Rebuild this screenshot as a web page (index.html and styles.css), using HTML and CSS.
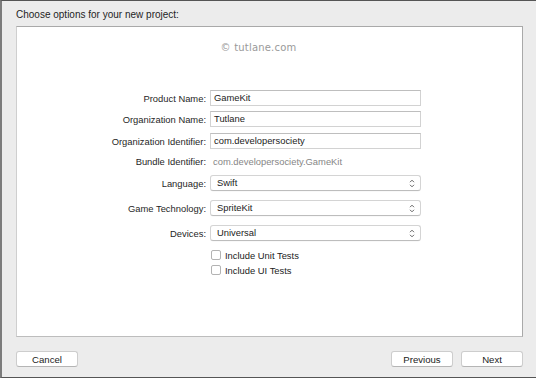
FILE: index.html
```html
<!DOCTYPE html>
<html lang="en">
<head>
  <meta charset="UTF-8" />
  <title>Choose options for your new project</title>
  <link rel="stylesheet" href="styles.css">
</head>
<body>
  <div class="window">
    <div class="title">Choose options for your new project:</div>

    <div class="panel">
      <div class="watermark">&copy; tutlane.com</div>

      <div class="form">
        <div class="row row-product">
          <label>Product Name:</label>
          <div class="field">GameKit</div>
        </div>
        <div class="row row-org">
          <label>Organization Name:</label>
          <div class="field">Tutlane</div>
        </div>
        <div class="row row-orgid">
          <label>Organization Identifier:</label>
          <div class="field">com.developersociety</div>
        </div>
        <div class="row row-bundle">
          <label>Bundle Identifier:</label>
          <div class="value">com.developersociety.GameKit</div>
        </div>
        <div class="row row-lang">
          <label>Language:</label>
          <div class="popup">Swift
            <svg class="arrows" width="6" height="9" viewBox="0 0 6 9"><path d="M1 3.2 L3 1.2 L5 3.2 M1 5.8 L3 7.8 L5 5.8" fill="none" stroke="#555" stroke-width="0.9"/></svg>
          </div>
        </div>
        <div class="row row-popup">
          <label>Game Technology:</label>
          <div class="popup">SpriteKit
            <svg class="arrows" width="6" height="9" viewBox="0 0 6 9"><path d="M1 3.2 L3 1.2 L5 3.2 M1 5.8 L3 7.8 L5 5.8" fill="none" stroke="#555" stroke-width="0.9"/></svg>
          </div>
        </div>
        <div class="row row-popup">
          <label>Devices:</label>
          <div class="popup">Universal
            <svg class="arrows" width="6" height="9" viewBox="0 0 6 9"><path d="M1 3.2 L3 1.2 L5 3.2 M1 5.8 L3 7.8 L5 5.8" fill="none" stroke="#555" stroke-width="0.9"/></svg>
          </div>
        </div>
        <div class="row row-check first">
          <span></span>
          <div class="check"><span class="box"></span>Include Unit Tests</div>
        </div>
        <div class="row row-check">
          <span></span>
          <div class="check"><span class="box"></span>Include UI Tests</div>
        </div>
      </div>
    </div>

    <div class="footer">
      <button class="btn">Cancel</button>
      <div class="nav">
        <button class="btn">Previous</button>
        <button class="btn">Next</button>
      </div>
    </div>
  </div>
</body>
</html>
```

FILE: styles.css
```css
body {
  margin: 0;
  background: #fff;
  font-family: 'Liberation Sans', Arial, sans-serif;
  color: #222;
}
.window {
  box-sizing: border-box;
  width: 536px;
  height: 378px;
  background: #ececec;
  border-left: 2px solid #7c7c7c;
  border-top: 1px solid #555;
  border-bottom: 1px solid #555;
  padding-left: 14px;
  display: flex;
  flex-direction: column;
}
.title {
  height: 25px;
  line-height: 27px;
  font-size: 10px;
  color: #1e1e1e;
}
.panel {
  box-sizing: border-box;
  width: 507px;
  height: 311px;
  background: #fff;
  border: 1px solid #a9a9a9;
  border-left-color: #cfcfcf;
  border-bottom-color: #bdbdbd;
}
.watermark {
  font-family: 'DejaVu Sans', sans-serif;
  font-size: 10px;
  color: #9a9a9a;
  text-align: center;
  padding-right: 22px;
  margin-top: 14px;
  line-height: 14px;
  letter-spacing: 0.2px;
}
.form {
  margin-top: 35px;
  display: flex;
  flex-direction: column;
}
.row {
  display: grid;
  grid-template-columns: 189px 211px;
  column-gap: 4px;
  align-items: center;
  font-size: 9.4px;
  height: 16px;
}
.row label {
  text-align: right;
  color: #262626;
}
.row-org { margin-top: 5px; }
.row-orgid { margin-top: 6px; }
.row-bundle { margin-top: 4px; }
.row-lang { margin-top: 6px; }
.row-popup { margin-top: 9px; }
.row-check { height: 12px; margin-top: 3px; }
.row-check.first { margin-top: 8px; }
.field {
  box-sizing: border-box;
  height: 16px;
  line-height: 14px;
  padding-left: 3px;
  border: 1px solid #d2d2d2;
  border-top-color: #bebebe;
  background: #fff;
}
.value {
  padding-left: 3px;
  color: #868686;
}
.popup {
  position: relative;
  box-sizing: border-box;
  height: 16px;
  line-height: 14px;
  padding-left: 6px;
  border: 1px solid #d4d4d4;
  border-bottom-color: #bdbdbd;
  border-radius: 3px;
  background: #fff;
  box-shadow: 0 0.5px 0 rgba(0,0,0,0.05);
}
.arrows {
  position: absolute;
  right: 5px;
  top: 3px;
}
.check {
  display: flex;
  align-items: center;
  gap: 4px;
  padding-left: 1px;
}
.box {
  box-sizing: border-box;
  width: 10px;
  height: 10px;
  border: 1px solid #b3b3b3;
  border-radius: 2px;
  background: #fff;
}
.footer {
  display: flex;
  justify-content: space-between;
  width: 507px;
  margin-top: 14px;
}
.nav {
  display: flex;
  gap: 8px;
}
.btn {
  box-sizing: border-box;
  width: 62px;
  height: 16px;
  padding: 0;
  font-family: 'Liberation Sans', Arial, sans-serif;
  font-size: 9.6px;
  color: #222;
  background: #fff;
  border: 1px solid #cdcdcd;
  border-bottom-color: #b5b5b5;
  border-radius: 3px;
}
```
